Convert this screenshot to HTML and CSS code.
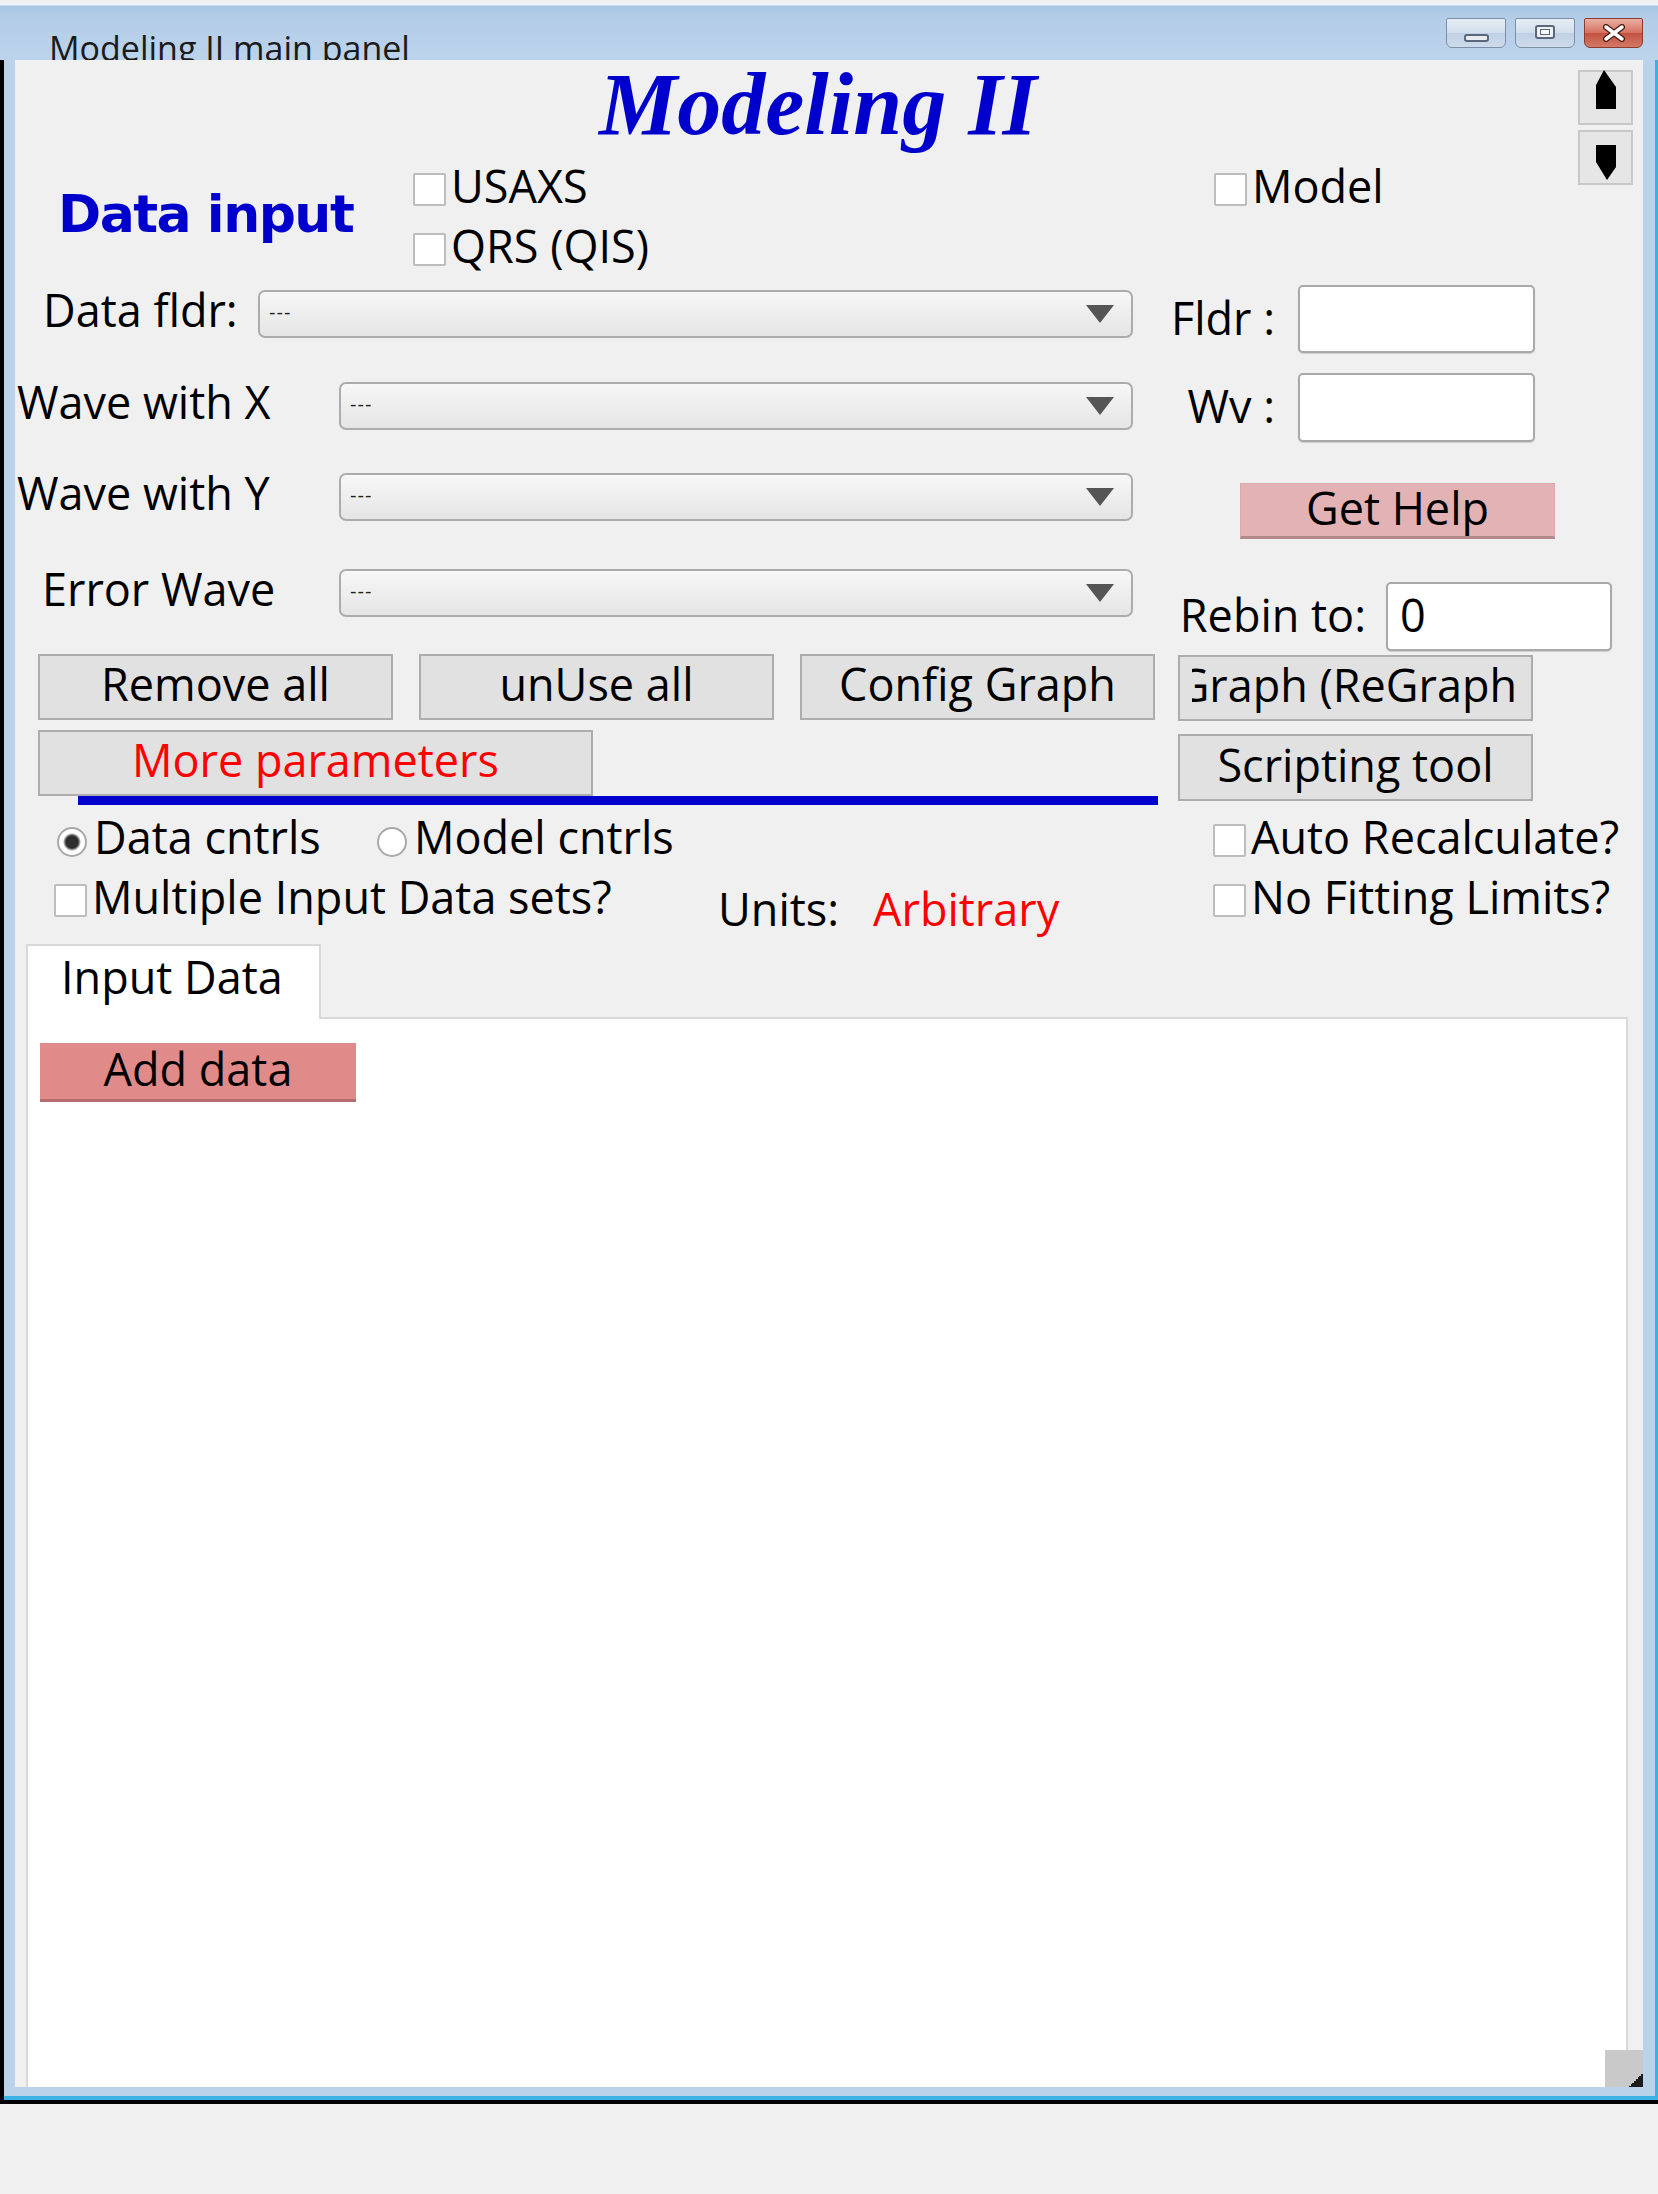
FILE: index.html
```html
<!DOCTYPE html>
<html lang="en">
<head>
<meta charset="utf-8">
<title>Modeling II main panel</title>
<link rel="stylesheet" href="styles.css">
</head>
<body>
<div class="window">
  <div class="titlebar">
    <span class="title">Modeling II main panel</span>
    <div class="winbtns">
      <div class="wb wb-min"><span class="ico-min"></span></div>
      <div class="wb wb-max"><span class="ico-max"><span class="ico-max-in"></span></span></div>
      <div class="wb wb-close">
        <svg width="26" height="18" viewBox="0 0 26 18"><path d="M5 3 L21 15 M21 3 L5 15" stroke="#4a1a14" stroke-width="6" stroke-linecap="round"/><path d="M5 3 L21 15 M21 3 L5 15" stroke="#fff" stroke-width="3.5" stroke-linecap="round"/></svg>
      </div>
    </div>
  </div>
  <div class="frame">
    <div class="frame-inner">
      <div class="client">
        <div class="header"><h1 class="app-title">Modeling II</h1></div>

        <div class="scroller">
          <div class="sbtn sbtn-up"><svg width="20" height="39" viewBox="0 0 20 39"><polygon points="8,0 20,17 20,39 0,39 0,15" fill="#000"/></svg></div>
          <div class="sbtn sbtn-down"><svg width="20" height="35" viewBox="0 0 20 35"><polygon points="0,0 20,0 20,22 11,35 0,17" fill="#000"/></svg></div>
        </div>

        <div class="columns">
          <div class="col-left">
            <div class="datarow">
              <div class="section-label">Data input</div>
              <div class="checkstack">
                <div class="check"><span class="box"></span>USAXS</div>
                <div class="check"><span class="box"></span>QRS (QIS)</div>
              </div>
            </div>

            <div class="field field-1">
              <span class="field-label fl-1">Data fldr:</span>
              <div class="combo combo-wide"><span class="combo-val">---</span><svg class="caret" width="28" height="18" viewBox="0 0 28 18"><polygon points="0,0 28,0 14,18" fill="#555"/></svg></div>
            </div>
            <div class="field field-2">
              <span class="field-label fl-2">Wave with X</span>
              <div class="combo"><span class="combo-val">---</span><svg class="caret" width="28" height="18" viewBox="0 0 28 18"><polygon points="0,0 28,0 14,18" fill="#555"/></svg></div>
            </div>
            <div class="field field-3">
              <span class="field-label fl-2">Wave with Y</span>
              <div class="combo"><span class="combo-val">---</span><svg class="caret" width="28" height="18" viewBox="0 0 28 18"><polygon points="0,0 28,0 14,18" fill="#555"/></svg></div>
            </div>
            <div class="field field-4">
              <span class="field-label fl-4">Error Wave</span>
              <div class="combo"><span class="combo-val">---</span><svg class="caret" width="28" height="18" viewBox="0 0 28 18"><polygon points="0,0 28,0 14,18" fill="#555"/></svg></div>
            </div>

            <div class="btnrow">
              <button class="btn">Remove all</button>
              <button class="btn">unUse all</button>
              <button class="btn">Config Graph</button>
            </div>
            <button class="btn btn-more">More parameters</button>
            <div class="blueline"></div>

            <div class="radiorow">
              <div class="radio radio-first"><span class="dot dot-on"></span>Data cntrls</div>
              <div class="radio"><span class="dot"></span>Model cntrls</div>
            </div>

            <div class="multirow">
              <div class="check multi-check"><span class="box"></span>Multiple Input Data sets?</div>
              <div class="units">Units:<span class="units-val">Arbitrary</span></div>
            </div>
          </div>

          <div class="col-right">
            <div class="check model-check"><span class="box"></span>Model</div>
            <div class="rfield rf-fldr">
              <span class="rlabel rl-short">Fldr :</span>
              <div class="input"></div>
            </div>
            <div class="rfield rf-wv">
              <span class="rlabel rl-short">Wv :</span>
              <div class="input input-tall"></div>
            </div>
            <button class="btn btn-help">Get Help</button>
            <div class="rfield rf-rebin">
              <span class="rlabel rl-long">Rebin to:</span>
              <div class="input input-tall input-rebin">0</div>
            </div>
            <button class="btn btn-graph"><span class="graph-clip"><span class="graph-text">Graph (ReGraph)</span></span></button>
            <button class="btn btn-script">Scripting tool</button>
            <div class="check opt-check opt-1"><span class="box"></span>Auto Recalculate?</div>
            <div class="check opt-check opt-2"><span class="box"></span>No Fitting Limits?</div>
          </div>
        </div>

        <div class="tabs">
          <div class="tabstrip"><div class="tab">Input Data</div></div>
          <div class="pane">
            <button class="btn-add">Add data</button>
          </div>
        </div>

        <div class="grip"><span class="grip-tri"></span></div>
      </div>
    </div>
  </div>
</div>
</body>
</html>
```

FILE: styles.css
```css
html, body {
  margin: 0;
  padding: 0;
}
body {
  background: #f0f0f0;
  font-family: "Open Sans", "Liberation Sans", sans-serif;
  color: #000;
}

/* ---------- window chrome ---------- */
.window {
  margin-top: 3px;
  width: 1658px;
}
.titlebar {
  height: 57px;
  display: flex;
  align-items: flex-start;
  overflow: hidden;
  background: linear-gradient(#eef3f9 0, #eef3f9 2px, #a9c5e3 3px, #b4cde8 16px, #bcd3eb 100%);
}
.title {
  font-size: 34px;
  line-height: 40px;
  padding: 25px 0 0 49px;
  color: #1b1b1b;
  white-space: nowrap;
}
.winbtns {
  margin: 15px 15px 0 auto;
  display: flex;
  gap: 9px;
}
.wb {
  width: 60px;
  height: 30px;
  box-sizing: border-box;
  border: 1px solid #7d8fa7;
  border-radius: 2px 2px 6px 6px;
  display: flex;
  align-items: center;
  justify-content: center;
  background: linear-gradient(#e6edf6, #d3deec 50%, #c0d0e4 51%, #cddbec);
}
.wb-close {
  width: 59px;
  background: linear-gradient(#eab0a4, #d6705f 50%, #c45140 51%, #d27a66);
  border-color: #8b3b30;
}
.ico-min {
  width: 25px;
  height: 8px;
  box-sizing: border-box;
  border: 2px solid #5a687a;
  border-radius: 3px;
  background: #e8ecf1;
  margin-top: 9px;
}
.ico-max {
  width: 20px;
  height: 14px;
  box-sizing: border-box;
  border: 2px solid #5a687a;
  border-radius: 3px;
  background: #eef1f5;
  display: flex;
  align-items: center;
  justify-content: center;
  margin-top: -3px;
}
.ico-max-in {
  width: 8px;
  height: 4px;
  border: 1px solid #5a687a;
  background: #fff;
}

.frame {
  border-left: 4px solid #000;
  border-bottom: 4px solid #000;
}
.frame-inner {
  background: #bad2ea;
  border-right: 3px solid #3cb2e4;
  border-bottom: 4px solid #3cb2e4;
  padding: 0 12px 9px 11px;
}
.client {
  position: relative;
  height: 2027px;
  background: #f0f0f0;
  display: flex;
  flex-direction: column;
  overflow: hidden;
  font-size: 45px;
  line-height: 48px;
}

/* ---------- header ---------- */
.header {
  height: 100px;
  padding-left: 574px;
  flex: none;
}
.app-title {
  margin: 0;
  padding: 0 10px;
  font: italic bold 88px/90px "Liberation Serif", "Times New Roman", serif;
  height: 100px;
  color: #0000cc;
  white-space: nowrap;
}
.scroller {
  position: absolute;
  top: 10px;
  right: 10px;
  display: flex;
  flex-direction: column;
  gap: 5px;
}
.sbtn {
  width: 55px;
  height: 55px;
  box-sizing: border-box;
  background: #e6e6e6;
  border: 2px solid #c8c8c8;
  display: flex;
  justify-content: center;
}
.sbtn-up { align-items: flex-start; }
.sbtn-up svg { margin-top: -2px; }
.sbtn-down { align-items: flex-end; padding-bottom: 3px; }

/* ---------- columns ---------- */
.columns {
  display: flex;
  flex: none;
}
.col-left {
  width: 1145px;
  display: flex;
  flex-direction: column;
  align-items: flex-start;
}
.col-right {
  flex: 1;
  display: flex;
  flex-direction: column;
  align-items: flex-start;
}

.datarow {
  display: flex;
  align-items: flex-start;
}
.section-label {
  margin: 24px 0 0 43px;
  width: 355px;
  font: bold 52px/60px "DejaVu Sans", "Liberation Sans", sans-serif;
  letter-spacing: -1.5px;
  color: #0000cc;
  white-space: nowrap;
}
.checkstack {
  display: flex;
  flex-direction: column;
  gap: 12px;
  margin-top: 1.5px;
}
.check {
  display: flex;
  align-items: flex-start;
  white-space: nowrap;
}
.box {
  flex: none;
  width: 33px;
  height: 33px;
  box-sizing: border-box;
  border: 2px solid #bdbdbd;
  border-radius: 2px;
  background: #fff;
  margin: 11.5px 5px 0 0;
}

/* combo rows */
.field {
  align-self: stretch;
  display: flex;
  align-items: flex-start;
  padding-right: 27px;
}
.field-1 { margin-top: 20.5px; }
.field-2 { margin-top: 44px; }
.field-3 { margin-top: 43px; }
.field-4 { margin-top: 48px; }
.field-label {
  margin-top: -4px;
  white-space: nowrap;
}
.fl-1 { margin-left: 28px; }
.fl-2 { margin-left: 2px; }
.fl-4 { margin-left: 27px; }
.combo {
  margin-left: auto;
  width: 794px;
  height: 48px;
  box-sizing: border-box;
  border: 2px solid #acacac;
  border-radius: 7px;
  background: linear-gradient(#f7f7f7, #e5e5e5);
  display: flex;
  align-items: center;
  padding: 0 17px 0 9px;
}
.combo-wide { width: 875px; }
.combo-val {
  font-family: "DejaVu Sans", sans-serif;
  font-size: 18px;
  line-height: 1;
  color: #222;
  letter-spacing: 1px;
  margin-top: -4px;
}
.caret { margin-left: auto; }

/* buttons */
.btn {
  font-family: "Open Sans", "Liberation Sans", sans-serif;
  font-size: 45px;
  line-height: 40px;
  color: #000;
  width: 355px;
  height: 66px;
  box-sizing: border-box;
  border: 2px solid #adadad;
  background: #e1e1e1;
  display: flex;
  align-items: center;
  justify-content: center;
  padding: 0 0 6px 0;
  margin: 0;
  white-space: nowrap;
  flex: none;
}
.btnrow {
  display: flex;
  gap: 26px;
  margin: 37px 0 0 23px;
}
.btn-more {
  width: 555px;
  margin: 10px 0 0 23px;
  color: #ff0000;
}
.blueline {
  width: 1080px;
  height: 9px;
  background: #0000cc;
  margin-left: 63px;
}

.radiorow {
  display: flex;
  margin: 7.5px 0 0 42px;
}
.radio {
  display: flex;
  align-items: flex-start;
  white-space: nowrap;
}
.radio-first { width: 320px; }
.dot {
  flex: none;
  width: 30px;
  height: 30px;
  box-sizing: border-box;
  border-radius: 50%;
  border: 2px solid #a8a8a8;
  background: #fff;
  margin: 14.5px 7px 0 0;
}
.dot-on {
  background: radial-gradient(circle, #2d2d2d 0, #2d2d2d 6px, #8a8a8a 7.5px, #fff 9px);
}

.multirow {
  display: flex;
  align-items: flex-start;
  margin: 12px 0 0 39px;
}
.multi-check { width: 664px; }
.units {
  margin-top: 12px;
  white-space: nowrap;
}
.units-val {
  color: #ff0000;
  margin-left: 34px;
}

/* right column */
.model-check { margin: 1.5px 0 0 54px; }
.rfield {
  display: flex;
  align-items: center;
}
.rf-fldr { margin-top: 75.5px; }
.rf-wv { margin-top: 20px; }
.rf-rebin { margin-top: 43px; }
.rlabel {
  box-sizing: border-box;
  text-align: right;
  white-space: nowrap;
  margin-top: -3px;
}
.rl-short { width: 138px; padding-right: 23px; }
.rl-long { width: 226px; padding-right: 20px; }
.input {
  width: 237px;
  height: 68px;
  box-sizing: border-box;
  border: 2px solid #a9a9a9;
  border-radius: 5px;
  background: #fff;
  box-shadow: 0 1px 1px rgba(0, 0, 0, 0.15);
  display: flex;
  align-items: center;
  padding: 0 0 4px 12px;
}
.input-tall { height: 69px; }
.input-rebin { width: 226px; }
.btn-help {
  width: 315px;
  height: 56px;
  margin: 41px 0 0 80px;
  border: 1px solid #dcaaad;
  border-bottom: 3px solid #b08a8d;
  background: #e2b2b5;
  padding-bottom: 4px;
}
.btn-graph { margin: 4px 0 0 18px; }
.graph-clip {
  width: 323px;
  margin-left: -4px;
  display: flex;
  justify-content: center;
  overflow: hidden;
  padding-bottom: 14px;
  margin-bottom: -14px;
}
.graph-text { flex: none; }
.btn-script { margin: 13px 0 0 18px; height: 67px; }
.opt-check { margin-left: 53px; }
.opt-1 { margin-top: 11.5px; }
.opt-2 { margin-top: 12px; }

/* ---------- tabs ---------- */
.tabs {
  flex: 1;
  display: flex;
  flex-direction: column;
  margin: 11.5px 15px 0 11px;
}
.tabstrip {
  display: flex;
  height: 75px;
  flex: none;
}
.tab {
  position: relative;
  z-index: 1;
  width: 295px;
  box-sizing: border-box;
  border: 2px solid #d9d9d9;
  border-bottom: 0;
  background: #fff;
  padding: 6.5px 0 0 33px;
  white-space: nowrap;
}
.pane {
  flex: 1;
  margin-top: -2px;
  border: 2px solid #d9d9d9;
  border-bottom: 0;
  background: #fff;
  display: flex;
  align-items: flex-start;
}
.btn-add {
  font-family: "Open Sans", "Liberation Sans", sans-serif;
  font-size: 45px;
  line-height: 40px;
  color: #000;
  margin: 24px 0 0 12px;
  width: 316px;
  height: 59px;
  box-sizing: border-box;
  border: 0;
  border-bottom: 3px solid #b56c6c;
  background: #e08a8a;
  padding: 0 0 4px 0;
  display: flex;
  align-items: center;
  justify-content: center;
  white-space: nowrap;
}

.grip {
  position: absolute;
  right: 0;
  bottom: 0;
  width: 38px;
  height: 37px;
  background: #c9c9c9;
  display: flex;
  align-items: flex-end;
  justify-content: flex-end;
}
.grip-tri {
  width: 14px;
  height: 14px;
  background: linear-gradient(to bottom right, transparent 50%, #1c1c1c 50%);
}
```
